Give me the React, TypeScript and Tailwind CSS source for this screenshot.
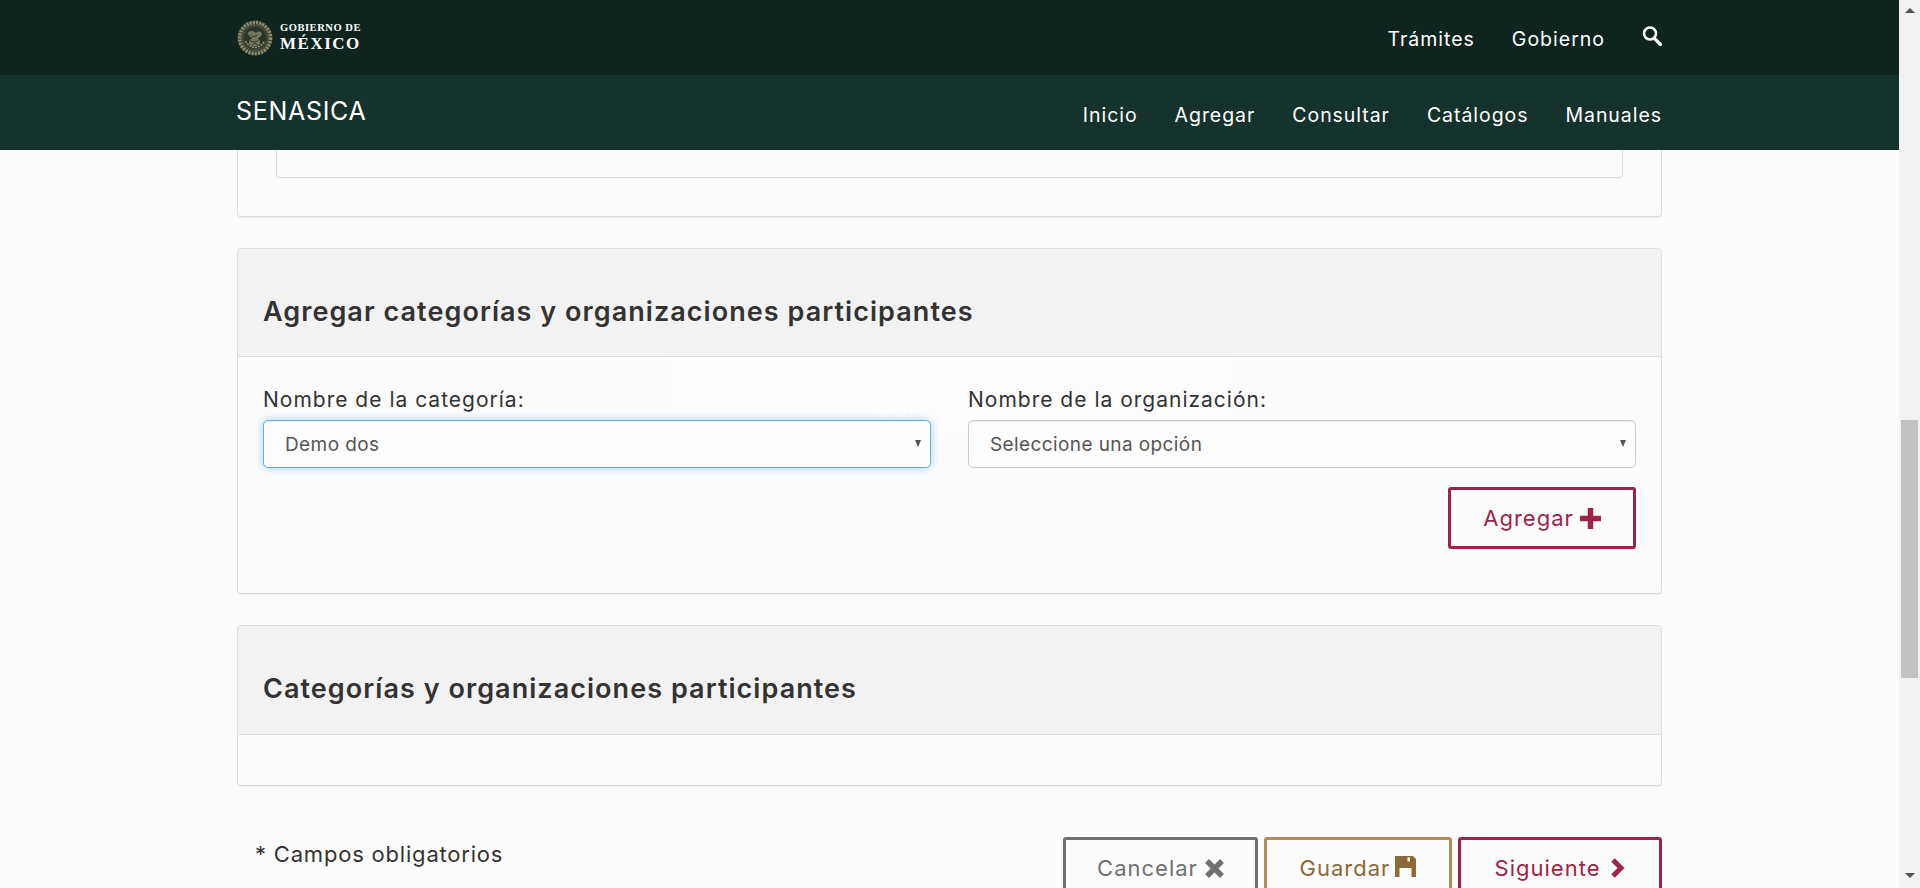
function Emblem() {
  return (
    <svg width="36" height="36" viewBox="0 0 36 36" className="shrink-0">
      <circle cx="18" cy="18" r="17.5" fill="#3d4435" />
      <circle cx="18" cy="18" r="15.5" fill="none" stroke="#8f8c6f" strokeWidth="3.5" strokeDasharray="2 1.2" />
      <circle cx="18" cy="18" r="12.5" fill="none" stroke="#5f6350" strokeWidth="1" strokeDasharray="1 1" />
      <circle cx="18" cy="18" r="11" fill="#28352c" />
      <path d="M10.500 13c3-3 7-2 8.500 0 2-2 5-2 6 1-1 3-3 3-4 5 2 1 3 4 1 6-3 2-7 2-9.500-1-2-3 1-5 3-6-2-1-4-2-5-5z" fill="#77775c" />
      <path d="M14 15l3 2 3-2M13 21l4 1 4-1M15 25l3-2 3 2" fill="none" stroke="#2f3a30" strokeWidth="1" />
      <path d="M8.500 21c2 4 6 6.500 9.500 6.500s7.500-2.500 9.500-6.500" fill="none" stroke="#9a9678" strokeWidth="1.500" strokeDasharray="2 1" />
    </svg>
  );
}

function SearchIcon() {
  return (
    <svg width="20" height="20" viewBox="0 0 20 20" className="shrink-0" fill="none" stroke="currentColor">
      <circle cx="8" cy="7.500" r="6" strokeWidth="2.500" />
      <path d="M12.500 12.500L18.500 18.500" strokeWidth="3.200" strokeLinecap="round" />
    </svg>
  );
}

function PlusIcon() {
  return (
    <svg width="21" height="21" viewBox="0 0 21 21" className="ml-[6px] shrink-0" fill="currentColor">
      <path d="M7.750 0h5.500v7.750H21v5.500h-7.750V21h-5.500v-7.750H0v-5.500h7.750z" />
    </svg>
  );
}

function CrossIcon() {
  return (
    <svg width="19" height="19" viewBox="0 0 19 19" className="ml-[7px] shrink-0" fill="none" stroke="currentColor">
      <path d="M2 2l15 15M17 2L2 17" strokeWidth="5.500" />
    </svg>
  );
}

function SaveIcon() {
  return (
    <svg width="21" height="21" viewBox="0 0 21 21" className="ml-[5px] -mt-[4px] shrink-0" fill="currentColor">
      <path fillRule="evenodd" d="M0 0h18l3 3v18h-4.500v-9h-12v9H0zM12.500 1.500v4h2.500v-4z" />
    </svg>
  );
}

function ChevronIcon() {
  return (
    <svg width="15" height="20" viewBox="0 0 15 20" className="ml-[10px] shrink-0" fill="none" stroke="currentColor">
      <path d="M3 2l8 8-8 8" strokeWidth="5" />
    </svg>
  );
}

function Btn({ label, icon, color, className }: { label: string; icon: React.ReactNode; color: string; className: string }) {
  return (
    <button className={`flex items-center justify-center border-[3px] rounded-[3px] bg-transparent text-[22px] tracking-[1px] ${color} ${className}`}>
      {label}
      {icon}
    </button>
  );
}

function Field({ label, value, focused }: { label: string; value: string; focused?: boolean }) {
  return (
    <div className="flex-1">
      <label className="block text-[21px] leading-[33px] tracking-[1px]">{label}</label>
      <div className="relative mt-[4px]">
        <select
          defaultValue={value}
          className={`block w-full h-[48px] pl-[21px] pt-[2px] appearance-none bg-[#fdfdfd] border rounded-[5px] text-[19px] tracking-[0.4px] text-[#555] ${
            focused
              ? 'border-[#66afe9] shadow-[inset_0_1px_1px_rgba(0,0,0,0.075),0_0_8px_rgba(102,175,233,0.6)]'
              : 'border-[#ccc] shadow-[inset_0_1px_1px_rgba(0,0,0,0.075)]'
          }`}
        >
          <option value={value}>{value}</option>
        </select>
        <span className="absolute right-[10px] top-[20px] w-0 h-0 border-x-[3.5px] border-x-transparent border-t-[7px] border-t-[#555]" />
      </div>
    </div>
  );
}

export default function App() {
  return (
    <div className="flex h-[888px] overflow-hidden bg-[#fcfcfc] font-[Inter,sans-serif] text-[#333]">
      <div className="relative flex-1 min-w-0">
        <header className="text-white">
          <div className="h-[75px] bg-[#0f241e]">
            <div className="w-[1425px] mx-auto h-full flex items-center justify-between">
              <div className="flex items-center gap-[7px]">
                <Emblem />
                <div className="font-['Liberation_Serif',serif] font-bold leading-none">
                  <div className="text-[10.5px] tracking-[0.55px]">GOBIERNO DE</div>
                  <div className="text-[17px] tracking-[1.5px] mt-[2px]">MÉXICO</div>
                </div>
              </div>
              <nav className="flex items-center text-[19.5px] leading-[26px] tracking-[1px] pt-[2px]">
                <a className="mr-[37px]">Trámites</a>
                <a className="mr-[37px]">Gobierno</a>
                <div className="-mt-[5px]">
                  <SearchIcon />
                </div>
              </nav>
            </div>
          </div>
          <div className="h-[75px] bg-[#15322c]">
            <div className="w-[1425px] mx-auto h-full flex justify-between">
              <div className="text-[25px] tracking-[0.7px] pt-[18px] -ml-[1px]">SENASICA</div>
              <nav className="flex gap-[37px] text-[19.5px] leading-[26px] tracking-[0.95px] pt-[27px]">
                <a>Inicio</a>
                <a>Agregar</a>
                <a>Consultar</a>
                <a>Catálogos</a>
                <a>Manuales</a>
              </nav>
            </div>
          </div>
        </header>

        <div className="absolute left-[666px] top-[357px] w-[566px] h-[81px] bg-white/30 flex justify-center pt-[30px]">
          <span className="text-[28px] leading-[40px] text-white">Cargando...</span>
        </div>

        <main className="relative z-10 w-[1425px] mx-auto">
          <div className="h-[67px] border-x border-b border-[#ddd] rounded-b-[4px] shadow-[0_1px_1px_rgba(0,0,0,0.05)] px-[38px]">
            <div className="h-[28px] border-x border-b border-[#ddd] rounded-b-[4px]" />
          </div>

          <section className="mt-[31px] h-[346px] border border-[#ddd] rounded-[4px] shadow-[0_1px_1px_rgba(0,0,0,0.05)]">
            <div className="h-[108px] bg-[#f2f2f2] border-b border-[#ddd] rounded-t-[4px] px-[25px] pt-[45px]">
              <h2 className="text-[27px] leading-[36px] font-semibold tracking-[1.05px] text-[#333]">Agregar categorías y organizaciones participantes</h2>
            </div>
            <div className="px-[25px] pt-[26px]">
              <div className="flex gap-[37px]">
                <Field label="Nombre de la categoría:" value="Demo dos" focused />
                <Field label="Nombre de la organización:" value="Seleccione una opción" />
              </div>
              <div className="flex justify-end mt-[19px]">
                <Btn label="Agregar" icon={<PlusIcon />} color="border-[#9d2449] text-[#9d2449]" className="w-[188px] h-[62px]" />
              </div>
            </div>
          </section>

          <section className="mt-[31px] h-[161px] border border-[#ddd] rounded-[4px] shadow-[0_1px_1px_rgba(0,0,0,0.05)]">
            <div className="h-[109px] bg-[#f2f2f2] border-b border-[#ddd] rounded-t-[4px] px-[25px] pt-[45px]">
              <h2 className="text-[27px] leading-[36px] font-semibold tracking-[1.05px] text-[#333]">Categorías y organizaciones participantes</h2>
            </div>
          </section>

          <div className="mt-[51px] flex justify-between">
            <p className="pl-[18px] pt-[1px] text-[22px] leading-[32px] tracking-[0.8px]">* Campos obligatorios</p>
            <div className="flex gap-[6px]">
              <Btn label="Cancelar" icon={<CrossIcon />} color="border-[#6f7271] text-[#6f7271]" className="w-[195px] h-[62px]" />
              <Btn label="Guardar" icon={<SaveIcon />} color="border-[#b38e5d] text-[#8a6a38]" className="w-[188px] h-[62px]" />
              <Btn label="Siguiente" icon={<ChevronIcon />} color="border-[#9d2449] text-[#9d2449]" className="w-[204px] h-[62px]" />
            </div>
          </div>
        </main>
      </div>

      <div className="w-[21px] shrink-0 bg-[#f1f1f1] flex flex-col items-center">
        <div className="mt-[8px] w-0 h-0 border-x-[5px] border-x-transparent border-b-[5px] border-b-[#505050]" />
        <div className="mt-[407px] w-[17px] h-[258px] bg-[#c1c1c1]" />
        <div className="mt-[195px] w-0 h-0 border-x-[5px] border-x-transparent border-t-[5px] border-t-[#505050]" />
      </div>
    </div>
  );
}
